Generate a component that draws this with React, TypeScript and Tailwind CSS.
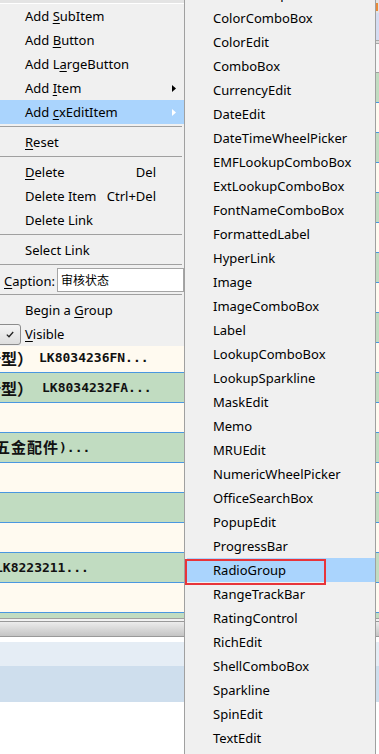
import React from 'react';

const editItems = [
  'CheckGroup', 'ColorComboBox', 'ColorEdit', 'ComboBox', 'CurrencyEdit', 'DateEdit',
  'DateTimeWheelPicker', 'EMFLookupComboBox', 'ExtLookupComboBox', 'FontNameComboBox',
  'FormattedLabel', 'HyperLink', 'Image', 'ImageComboBox', 'Label', 'LookupComboBox',
  'LookupSparkline', 'MaskEdit', 'Memo', 'MRUEdit', 'NumericWheelPicker', 'OfficeSearchBox',
  'PopupEdit', 'ProgressBar', 'RadioGroup', 'RangeTrackBar', 'RatingControl', 'RichEdit',
  'ShellComboBox', 'Sparkline', 'SpinEdit', 'TextEdit', 'TimeEdit',
];

const cjk = "font-['Noto_Sans_CJK_SC',sans-serif]";
const mono = "font-['DejaVu_Sans_Mono','Noto_Sans_CJK_SC',monospace]";

// texts in grid rows, keyed by row index
function RowText({ i }: { i: number }) {
  if (i === 9 || i === 10) {
    return (
      <div className="flex items-center font-bold text-[#111]">
        <span className={`${cjk} text-[16px] -ml-[15px]`}>新型）</span>
        <span className={`${mono} text-[13px] ${i === 9 ? 'ml-[6px]' : 'ml-[9px]'}`}>
          {i === 9 ? 'LK8034236FN...' : 'LK8034232FA...'}
        </span>
      </div>
    );
  }
  if (i === 12) {
    return (
      <div className="flex items-center font-bold text-[#111]">
        <span className={`${cjk} text-[15px] tracking-[1px] -ml-[5px]`}>五金配件</span>
        <span className={`${mono} text-[13px]`}>)...</span>
      </div>
    );
  }
  if (i === 16) {
    return (
      <div className={`${mono} text-[13px] font-bold text-[#111] -ml-[5px]`}>LK8223211...</div>
    );
  }
  return null;
}

function Sep({ className }: { className: string }) {
  return (
    <div className={className}>
      <div className="h-px w-[182px] bg-[#a0a0a0]" />
    </div>
  );
}

function Arrow({ color }: { color: string }) {
  return (
    <svg width="4" height="7" viewBox="0 0 4 7" className="absolute left-[172px] top-[9px]">
      <path d="M0 0 L4 3.5 L0 7 Z" fill={color} />
    </svg>
  );
}

function Item({
  children,
  active,
  shortcut,
  arrow,
}: {
  children: React.ReactNode;
  active?: boolean;
  shortcut?: string;
  arrow?: string;
}) {
  return (
    <div
      className={`relative flex h-[24px] items-center justify-between pl-[25px] pr-[28px] pt-[1px] ${
        active ? 'bg-[#aad4fd]' : ''
      }`}
    >
      <span>{children}</span>
      {shortcut && <span>{shortcut}</span>}
      {arrow && <Arrow color={arrow} />}
    </div>
  );
}

const U = ({ children }: { children: React.ReactNode }) => (
  <span className="underline decoration-1 underline-offset-[2px]">{children}</span>
);

export default function App() {
  const rows = Array.from({ length: 18 }, (_, i) => i);

  return (
    <div className="relative h-[754px] w-[379px] overflow-hidden bg-white">
      {/* Grid behind the menus */}
      <div className="flex h-full flex-col">
        <div className="flex h-[13px] items-center justify-end bg-[#e4e4e4]">
          <div className="mr-[1px] h-[8px] w-[3px] bg-[#e98a3a]" />
        </div>
        <div className="h-[27px] bg-[#d5dcf1]" />
        <div className="h-[4px] border-y border-[#a8a8a8] bg-[#dcdcdc]" />
        <div className="h-[28px] bg-[#f7f7f7]" />
        <div className="h-px bg-[#a0a0a0]" />
        {rows.map((i) => (
          <div
            key={i}
            className={`flex h-[30px] items-center border-b border-[#4a97e0] ${
              i % 2 === 0 ? 'bg-[#c1dcc1]' : 'bg-[#fffaf0]'
            }`}
          >
            <RowText i={i} />
          </div>
        ))}
        <div className="h-[5px] bg-[#c1dcc1]" />
        <div className="h-[3px] border-t border-[#a0a0a0] bg-[#f2f2f2]" />
        <div className="h-[16px] border-y border-[#999] bg-gradient-to-b from-[#ececec] to-[#c4c4c4]" />
        <div className="h-[5px] bg-white" />
        <div className="h-[24px] bg-[#e5edf5]" />
        <div className="h-[36px] bg-[#cedeed]" />
        <div className="flex-1 bg-white" />
      </div>

      {/* Context menu */}
      <div className="absolute left-0 top-[3px] w-[184px] border-t border-white bg-[#f0f0f0] font-['Noto_Sans',sans-serif] text-[13px] text-black">
        <Item>
          Add <U>S</U>ubItem
        </Item>
        <Item>
          Add <U>B</U>utton
        </Item>
        <Item>
          Add L<U>a</U>rgeButton
        </Item>
        <Item arrow="#000">
          Add <U>I</U>tem
        </Item>
        <Item active arrow="#ffffff">
          Add <U>c</U>xEditItem
        </Item>
        <Sep className="pt-[2px] pb-[3px]" />
        <Item>
          <U>R</U>eset
        </Item>
        <Sep className="pt-[2px] pb-[3px]" />
        <Item shortcut="Del">
          <U>D</U>elete
        </Item>
        <Item shortcut="Ctrl+Del">Delete Item</Item>
        <Item>Delete Link</Item>
        <Sep className="pt-[2px] pb-[3px]" />
        <Item>Select Link</Item>
        <Sep className="pt-[2px] pb-[1px]" />
        <div className="flex h-[27px] items-start pt-[2px]">
          <span className="ml-[4px] w-[53px] pt-[1px] leading-[24px]">
            <U>C</U>aption:
          </span>
          <div className={`flex h-[24px] flex-1 items-center border border-[#a5a5a5] bg-white pl-[3px] text-[12px] ${cjk}`}>
            审核状态
          </div>
        </div>
        <Sep className="pt-[1px] pb-[3px]" />
        <Item>
          Begin a <U>G</U>roup
        </Item>
        <div className="flex h-[24px] items-center">
          <div className="-ml-[3px] flex h-[21px] w-[24px] items-center justify-center rounded-[3px] border border-[#8c8c8c] bg-gradient-to-b from-[#f4f4f4] to-[#dedede]">
            <svg width="8" height="7" viewBox="0 0 8 7" className="ml-[2px]">
              <path d="M0.8 3.6 L3 5.8 L7.2 1" fill="none" stroke="#222" strokeWidth="1.3" />
            </svg>
          </div>
          <span className="ml-[4px] pt-[1px]">
            <U>V</U>isible
          </span>
        </div>
      </div>

      {/* Submenu with edit item types */}
      <div className="absolute left-[184px] top-0 h-[754px] w-[192px] overflow-hidden border-x border-[#a0a0a0] bg-[#f0f0f0] font-['Noto_Sans',sans-serif] text-[13px] text-black">
        <div className="-mt-[18px] pl-[2px]">
          {editItems.map((name) => (
            <div
              key={name}
              className={`flex h-[24px] items-center pl-[26px] pt-[1px] ${
                name === 'RadioGroup' ? 'bg-[#aad4fd]' : ''
              }`}
            >
              {name}
            </div>
          ))}
        </div>
      </div>

      {/* Annotation box */}
      <div className="absolute left-[185px] top-[559px] h-[26px] w-[141px] border-2 border-[#e8343a]" />
    </div>
  );
}
